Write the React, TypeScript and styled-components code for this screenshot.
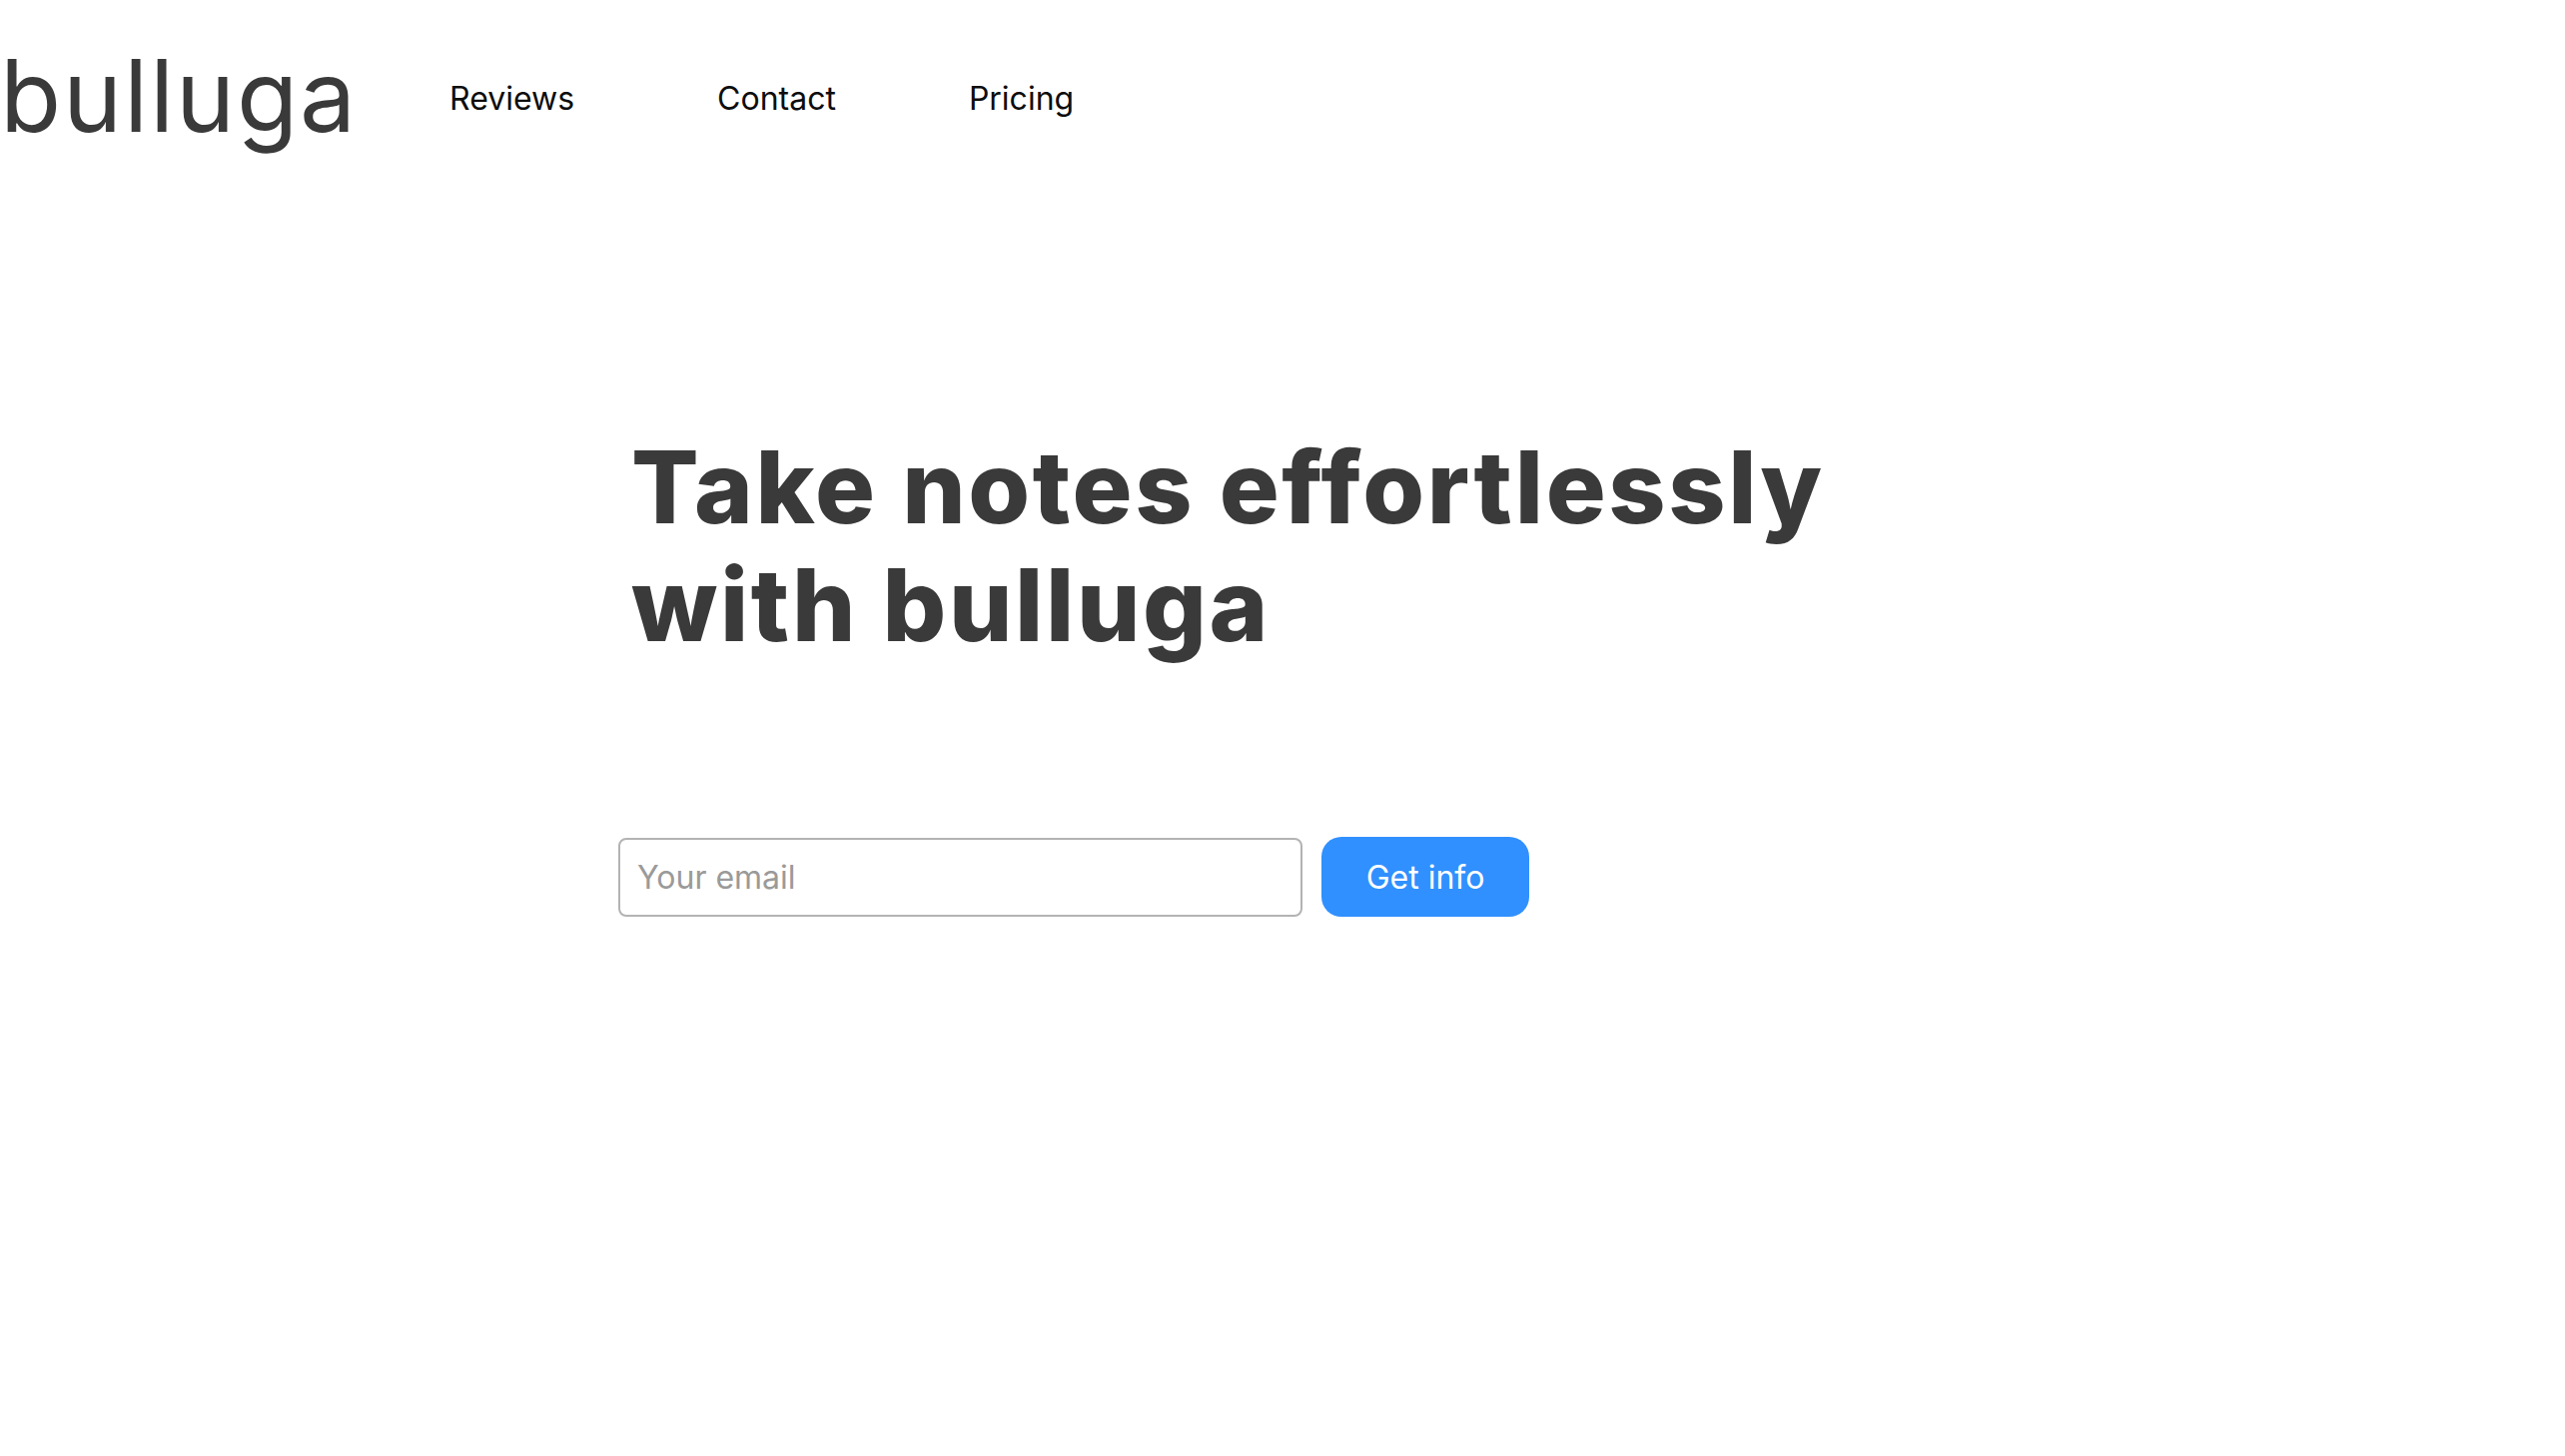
import React from "react";
import styled, { createGlobalStyle } from "styled-components";

const GlobalStyle = createGlobalStyle`
  html, body {
    margin: 0;
    padding: 0;
    background: #ffffff;
  }
  body {
    font-family: Inter, "Noto Sans", "Liberation Sans", sans-serif;
    -webkit-font-smoothing: antialiased;
  }
  * {
    box-sizing: border-box;
  }
`;

const Page = styled.div`
  width: 100%;
  min-height: 1458px;
  display: flex;
  flex-direction: column;
`;

const Header = styled.header`
  display: flex;
  align-items: center;
  padding-top: 35px;
`;

const Logo = styled.div`
  font-size: 100px;
  font-weight: 400;
  color: #3a3a3a;
  line-height: 121px;
  letter-spacing: 1.8px;
`;

const Nav = styled.nav`
  display: flex;
  align-items: center;
  margin-left: 92px;
  margin-top: 6px;
`;

const NavLink = styled.a<{ $space?: number }>`
  margin-left: ${(p) => p.$space ?? 0}px;
  font-size: 32px;
  font-weight: 400;
  color: #0d0d0d;
  text-decoration: none;
  cursor: pointer;
`;

const Hero = styled.main`
  display: flex;
  flex-direction: column;
  padding-left: 619px;
  padding-top: 273px;
`;

const Headline = styled.h1`
  margin: 0 0 0 13px;
  font-size: 100px;
  font-weight: 800;
  line-height: 118px;
  color: #3a3a3a;
  letter-spacing: 2.6px;
`;

const Form = styled.form`
  display: flex;
  align-items: center;
  gap: 19px;
  margin-top: 173px;
`;

const EmailInput = styled.input`
  width: 685px;
  height: 79px;
  border: 2px solid #b3b3b3;
  border-radius: 8px;
  padding: 0 17px;
  font-family: inherit;
  font-size: 32px;
  color: #333333;
  outline: none;

  &::placeholder {
    color: #9a9a9a;
  }
`;

const SubmitButton = styled.button`
  height: 80px;
  width: 208px;
  border: none;
  border-radius: 20px;
  background: #3090ff;
  color: #ffffff;
  font-family: inherit;
  font-size: 32px;
  font-weight: 400;
  cursor: pointer;
`;

export default function App() {
  return (
    <>
      <GlobalStyle />
      <Page>
        <Header>
          <Logo>bulluga</Logo>
          <Nav>
            <NavLink>Reviews</NavLink>
            <NavLink $space={143}>Contact</NavLink>
            <NavLink $space={133}>Pricing</NavLink>
          </Nav>
        </Header>
        <Hero>
          <Headline>
            Take notes effortlessly
            <br />
            with bulluga
          </Headline>
          <Form onSubmit={(e) => e.preventDefault()}>
            <EmailInput type="email" placeholder="Your email" />
            <SubmitButton type="submit">Get info</SubmitButton>
          </Form>
        </Hero>
      </Page>
    </>
  );
}
